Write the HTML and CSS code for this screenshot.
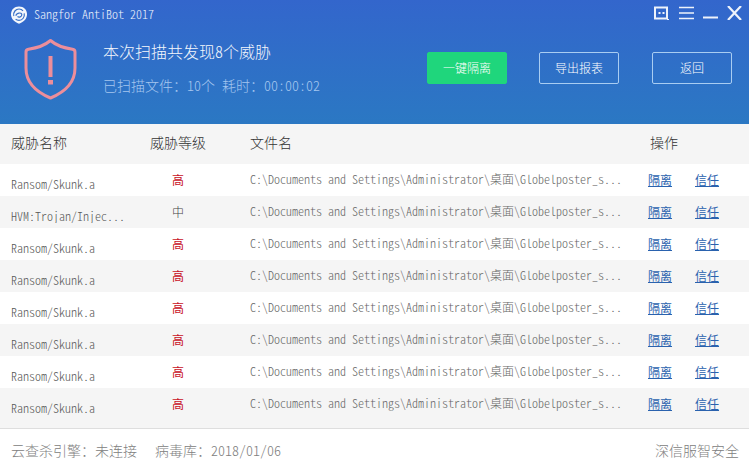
FILE: index.html
```html
<!DOCTYPE html>
<html lang="zh-CN">
<head>
<meta charset="utf-8">
<title>Sangfor AntiBot 2017</title>
<link rel="stylesheet" href="styles.css">
</head>
<body>
<div class="app">
  <header class="hero">
    <div class="titlebar">
      <svg class="logo" width="18" height="18" viewBox="0 0 18 18"><path d="M9 .5C13.800.5 17 3.800 17 8.300c0 4.200-3 7.700-8 9.500-5-1.800-8-5.300-8-9.500C1 3.800 4.200.5 9 .5z" fill="#f4f7fc"/><path d="M3.800 10C2.800 6 6 3 9 3c1.800 0 3.200.7 4 1.800M14.200 7.400C15 11 12.400 14.400 9 14.400c-1.400 0-2.600-.5-3.400-1.300M6 9.800C6 6.800 11.800 5.800 11.800 8.800c0 2-2.800 2.800-4.300 1.800" fill="none" stroke="#3a70c6" stroke-width="1.200"/></svg>
      <span class="app-name">Sangfor AntiBot 2017</span>
      <div class="win-controls">
        <svg width="16" height="14" viewBox="0 0 16 14"><path d="M1 1.500h12v11H1z" fill="none" stroke="#eef3fb" stroke-width="2"/><path d="M4.500 6h2v2h-2zM8.500 6h2v2h-2zM13 13h2v1h-2z" fill="#eef3fb"/></svg>
        <svg width="15" height="14" viewBox="0 0 15 14"><path d="M0 1.500h15M0 7h15M0 12.500h15" stroke="#eef3fb" stroke-width="1.600"/></svg>
        <svg width="15" height="14" viewBox="0 0 15 14"><path d="M0 11.500h15" stroke="#eef3fb" stroke-width="2"/></svg>
        <svg width="15" height="14" viewBox="0 0 15 14"><path d="M1 0l13 14M14 0L1 14" stroke="#eef3fb" stroke-width="2.200"/></svg>
      </div>
    </div>
    <div class="summary">
      <svg class="shield" width="53" height="62" viewBox="0 0 53 62"><path d="M26.500 2.500c5 4.300 12 7.300 22 8.700 1.500.2 2.500 1.300 2.500 2.800V30c0 14-10 24-24.500 30C12 54 2 44 2 30V14c0-1.500 1-2.600 2.500-2.800 10-1.400 17-4.400 22-8.700z" fill="none" stroke="#ec8e9b" stroke-width="3" stroke-linejoin="round"/><path d="M24.500 18h4v21h-4zM24 42h5v4.500h-5z" fill="#ec8e9b"/></svg>
      <div class="summary-text">
        <div class="headline">本次扫描共发现8个威胁</div>
        <div class="subline">已扫描文件：10个 耗时：00:00:02</div>
      </div>
      <div class="actions">
        <button class="btn btn-green">一键隔离</button>
        <button class="btn btn-line">导出报表</button>
        <button class="btn btn-line">返回</button>
      </div>
    </div>
  </header>

  <main class="threats">
    <div class="row row-head">
      <div>威胁名称</div><div>威胁等级</div><div>文件名</div><div class="ops-head">操作</div>
    </div>
    <div class="row"><div class="name">Ransom/Skunk.a</div><div class="level high">高</div><div class="path">C:\Documents and Settings\Administrator\桌面\Globelposter_s...</div><div class="ops"><a href="#">隔离</a><a href="#">信任</a></div></div>
    <div class="row"><div class="name">HVM:Trojan/Injec...</div><div class="level mid">中</div><div class="path">C:\Documents and Settings\Administrator\桌面\Globelposter_s...</div><div class="ops"><a href="#">隔离</a><a href="#">信任</a></div></div>
    <div class="row"><div class="name">Ransom/Skunk.a</div><div class="level high">高</div><div class="path">C:\Documents and Settings\Administrator\桌面\Globelposter_s...</div><div class="ops"><a href="#">隔离</a><a href="#">信任</a></div></div>
    <div class="row"><div class="name">Ransom/Skunk.a</div><div class="level high">高</div><div class="path">C:\Documents and Settings\Administrator\桌面\Globelposter_s...</div><div class="ops"><a href="#">隔离</a><a href="#">信任</a></div></div>
    <div class="row"><div class="name">Ransom/Skunk.a</div><div class="level high">高</div><div class="path">C:\Documents and Settings\Administrator\桌面\Globelposter_s...</div><div class="ops"><a href="#">隔离</a><a href="#">信任</a></div></div>
    <div class="row"><div class="name">Ransom/Skunk.a</div><div class="level high">高</div><div class="path">C:\Documents and Settings\Administrator\桌面\Globelposter_s...</div><div class="ops"><a href="#">隔离</a><a href="#">信任</a></div></div>
    <div class="row"><div class="name">Ransom/Skunk.a</div><div class="level high">高</div><div class="path">C:\Documents and Settings\Administrator\桌面\Globelposter_s...</div><div class="ops"><a href="#">隔离</a><a href="#">信任</a></div></div>
    <div class="row"><div class="name">Ransom/Skunk.a</div><div class="level high">高</div><div class="path">C:\Documents and Settings\Administrator\桌面\Globelposter_s...</div><div class="ops"><a href="#">隔离</a><a href="#">信任</a></div></div>
  </main>

  <footer class="status">
    <div class="status-left"><span>云查杀引擎：未连接</span><span>病毒库：2018/01/06</span></div>
    <div>深信服智安全</div>
  </footer>
</div>
</body>
</html>
```

FILE: styles.css
```css
* { box-sizing: border-box; }
html, body { margin: 0; height: 100%; overflow: hidden; background: #fff; }
body { font-family: "Noto Sans CJK SC", "Liberation Sans", sans-serif; font-weight: 300; font-feature-settings: "hwid"; }
.app { width: 749px; height: 471px; display: flex; flex-direction: column; }

.hero { height: 124px; flex: none; background: linear-gradient(#3366cc, #2b78c3); color: #fff; display: flex; flex-direction: column; }
.titlebar { height: 30px; flex: none; display: flex; align-items: center; padding: 0 7px 0 10px; }
.logo { margin-right: 6px; flex: none; }
.app-name { font-size: 12px; line-height: 14px; color: #eef3fb; padding-bottom: 2px; }
.win-controls { margin-left: auto; display: flex; gap: 9px; align-items: center; margin-top: -5px; }
.win-controls svg { display: block; }

.summary { display: flex; align-items: flex-start; padding: 7px 17px 0 24px; }
.shield { flex: none; margin-top: 1px; }
.summary-text { margin-left: 26px; padding-top: 4px; }
.headline { font-size: 16px; line-height: 20px; color: #f4f7fc; }
.subline { font-size: 14px; line-height: 20px; margin-top: 14px; color: #a5c6ef; }

.actions { margin-left: auto; display: flex; gap: 32px; padding-top: 15px; }
.btn { width: 80px; height: 32px; padding: 0; border-radius: 2px; font: 300 12px/16px "Noto Sans CJK SC", sans-serif; color: #fff; background: transparent; border: 1px solid #a9cdf2; }
.btn-green { background: #1fd67c; border-color: #1fd67c; }
.btn-line:last-child { margin-left: 1px; }

.threats { flex: none; }
.row { display: grid; grid-template-columns: 150px 56px 44px 398px 101px; height: 32px; align-items: center; background: #fff; }
.row > :first-child { padding-left: 11px; }
.row > .path { grid-column: 4; }
.row:nth-child(odd) { background: #f5f5f5; }
.row:last-child { height: 40px; padding-bottom: 8px; }
.row-head { grid-template-columns: 150px 100px 400px 99px; height: 40px; background: #ebebeb; font-size: 14px; color: #333; padding-bottom: 4px; }
.row .name { font-size: 12px; line-height: 14px; color: #555; padding-top: 8px; white-space: nowrap; overflow: hidden; }
.level { font-size: 12px; text-align: center; padding-bottom: 2px; }
.high { color: #c8101e; font-weight: 400; }
.mid { color: #444; }
.path { font-size: 12px; line-height: 14px; color: #666; white-space: nowrap; padding-bottom: 3px; }
.ops { display: flex; gap: 23px; font-size: 12px; padding-bottom: 2px; }
.ops a { color: #2a62ae; font-weight: 400; }

.status { flex: 1; border-top: 1px solid #dedede; display: flex; justify-content: space-between; align-items: center; padding: 0 10px 0 11px; font-size: 14px; color: #808080; }
.status-left { display: flex; gap: 18px; }
```
